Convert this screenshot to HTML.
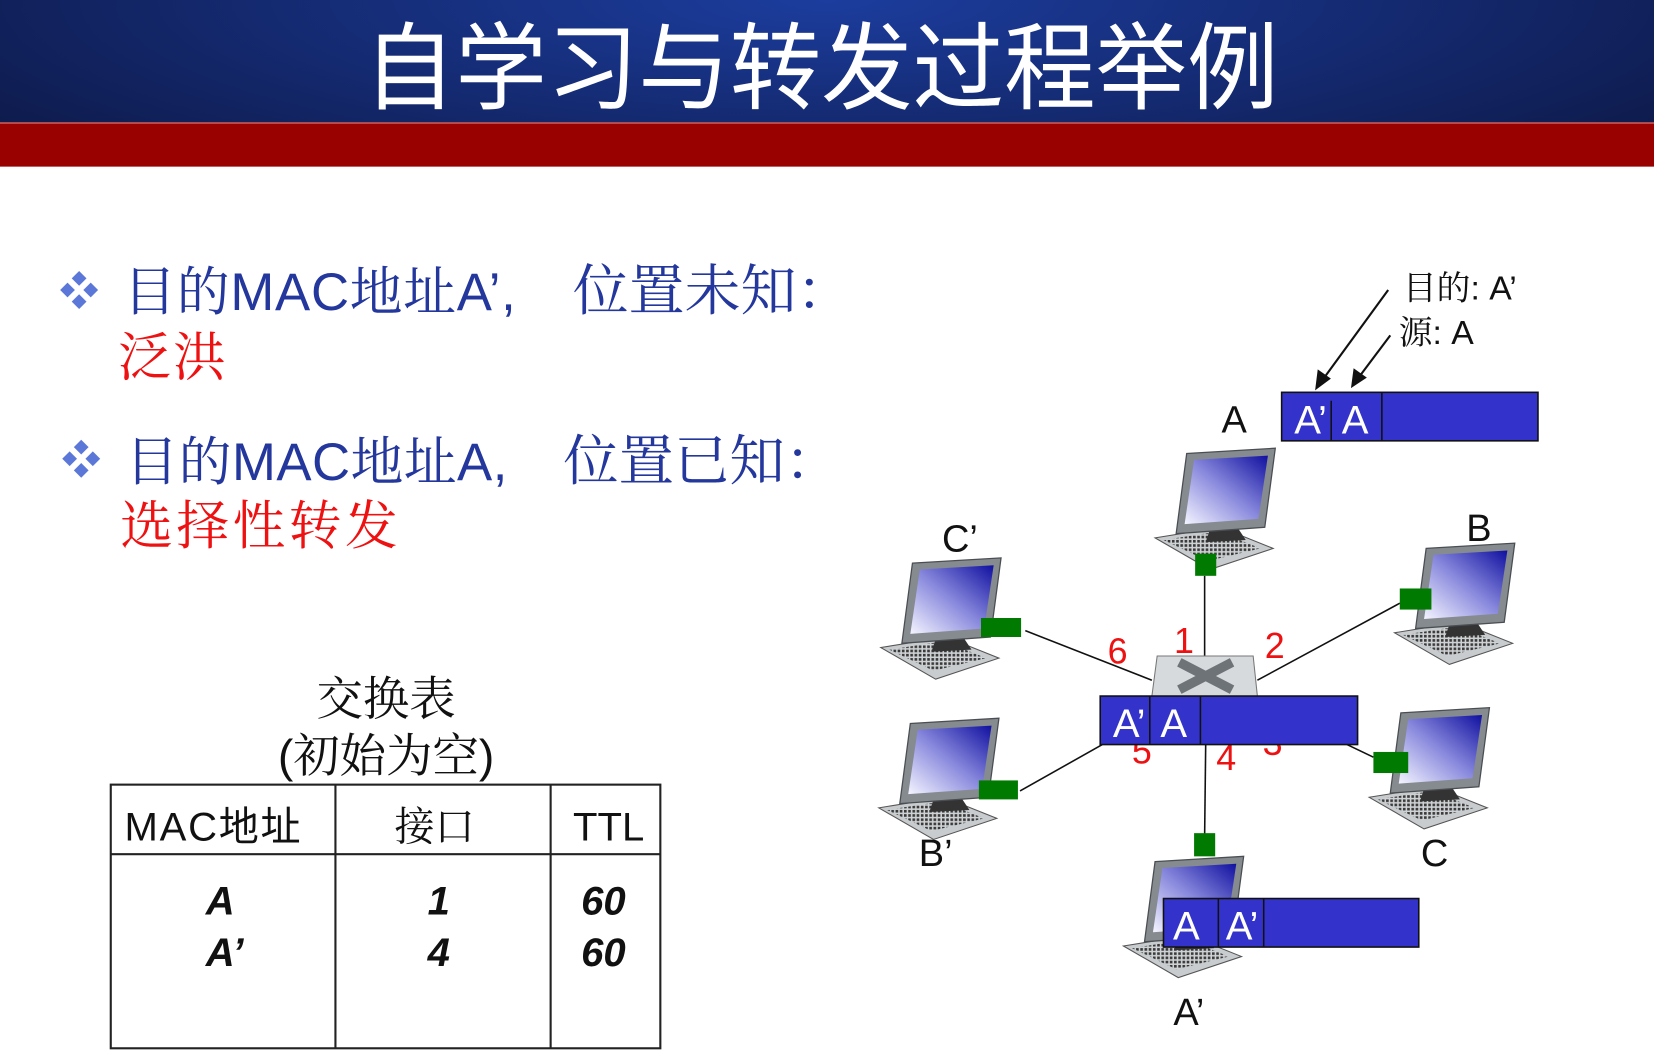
<!DOCTYPE html>
<html><head><meta charset="utf-8"><style>
html,body{margin:0;padding:0;background:#fff;overflow:hidden}
svg{display:block}
.cjk{font-family:"Liberation Sans","Noto Serif CJK SC",serif}
.sans{font-family:"Liberation Sans","Noto Sans CJK SC",sans-serif}
</style></head><body>
<svg width="1654" height="1062" viewBox="0 0 1568 1007" preserveAspectRatio="none" xmlns="http://www.w3.org/2000/svg">
<defs>
<radialGradient id="hd" cx="0.5" cy="0" r="0.6" gradientTransform="scale(1,3)">
<stop offset="0" stop-color="#1c3d9e"/><stop offset="1" stop-color="#0e1b4d"/></radialGradient>
<linearGradient id="scr" x1="0" y1="1" x2="1" y2="0">
<stop offset="0" stop-color="#f4f4ff"/><stop offset="0.5" stop-color="#8888dd"/><stop offset="1" stop-color="#1010a0"/></linearGradient>
<pattern id="keys" width="4" height="4" patternUnits="userSpaceOnUse">
<rect width="4" height="4" fill="#cfd2d4"/><rect width="2.5" height="2.5" fill="#3a3a3a"/></pattern>
<symbol id="pc" overflow="visible">
<polygon points="0,82 62,72 112,92 52,112" fill="#c8ccce" stroke="#555" stroke-width="1"/>
<polygon points="8,84 60,76 100,92 50,104" fill="url(#keys)"/>
<polygon points="52,74 78,72 86,84 48,86" fill="#333"/>
<polygon points="30,2 114,-3 104,72 20,78" fill="#858b8f" stroke="#4a4e52" stroke-width="1.2"/>
<polygon points="37,8 107,4 98,64 28,69" fill="url(#scr)"/>
</symbol>
</defs>
<rect x="0" y="0" width="1568" height="116" fill="url(#hd)"/>
<rect x="0" y="116" width="1568" height="42" fill="#990000"/>
<rect x="0" y="116" width="1568" height="1.5" fill="#c05050"/>
<text x="345" y="96" font-size="90" fill="#fff" textLength="867" lengthAdjust="spacingAndGlyphs" style="font-family:'Noto Sans CJK SC',sans-serif">自学习与转发过程举例</text>

<g fill="#5b78d8">
<polygon points="75,257 82,264 75,271 68,264"/><polygon points="64,268 71,275 64,282 57,275"/>
<polygon points="86,268 93,275 86,282 79,275"/><polygon points="75,279 82,286 75,293 68,286"/>
<polygon points="77,417 84,424 77,431 70,424"/><polygon points="66,428 73,435 66,442 59,435"/>
<polygon points="88,428 95,435 88,442 81,435"/><polygon points="77,439 84,446 77,453 70,446"/>
</g>
<g font-size="50" fill="#23379d" class="cjk">
<text x="117" y="294" textLength="372" lengthAdjust="spacing">目的MAC地址A’,</text><text x="543" y="294" font-size="53">位置未知：</text>
<text x="119" y="455" textLength="362" lengthAdjust="spacing">目的MAC地址A,</text><text x="534" y="455" font-size="52.5">位置已知：</text>
</g>
<text x="112" y="356" font-size="50" fill="#ee1111" class="cjk" textLength="102" lengthAdjust="spacing">泛洪</text>
<text x="114" y="516" font-size="50" fill="#ee1111" class="cjk" textLength="263" lengthAdjust="spacing">选择性转发</text>

<text x="366" y="678" font-size="44" text-anchor="middle" class="cjk" fill="#111">交换表</text>
<text x="366" y="732" font-size="44" text-anchor="middle" class="cjk" fill="#111">(初始为空)</text>
<g stroke="#222" stroke-width="2" fill="none">
<rect x="105" y="744" width="521" height="250"/>
<line x1="105" y1="810" x2="626" y2="810"/>
<line x1="318" y1="744" x2="318" y2="994"/>
<line x1="522" y1="744" x2="522" y2="994"/>
</g>
<text x="118" y="797" font-size="38" class="sans" fill="#111" textLength="167" lengthAdjust="spacing">MAC地址</text>
<text x="412" y="797" font-size="38" text-anchor="middle" class="cjk" fill="#111">接口</text>
<text x="577" y="797" font-size="38" text-anchor="middle" class="sans" fill="#111">TTL</text>
<g font-size="38" font-weight="bold" font-style="italic" class="sans" fill="#111">
<text x="195" y="867">A</text><text x="195" y="916">A’</text>
<text x="416" y="867" text-anchor="middle">1</text><text x="416" y="916" text-anchor="middle">4</text>
<text x="572" y="867" text-anchor="middle">60</text><text x="572" y="916" text-anchor="middle">60</text>
</g>

<g stroke="#111" stroke-width="1.5">
<line x1="1142" y1="546" x2="1142" y2="655"/>
<line x1="972" y1="598" x2="1092" y2="645"/>
<line x1="1327" y1="572" x2="1192" y2="645"/>
<line x1="967" y1="750" x2="1045" y2="706"/>
<line x1="1277" y1="706" x2="1302" y2="718"/>
<line x1="1143" y1="706" x2="1142" y2="792"/>
</g>
<use href="#pc" x="1095" y="428"/>
<use href="#pc" x="835" y="532"/>
<use href="#pc" x="1322" y="518"/>
<use href="#pc" x="833" y="684"/>
<use href="#pc" x="1298" y="674"/>
<use href="#pc" x="1065" y="815"/>
<g fill="#007a00">
<rect x="1133" y="525" width="20" height="21"/>
<rect x="930" y="586" width="38" height="18"/>
<rect x="1327" y="558" width="30" height="20"/>
<rect x="928" y="740" width="37" height="18"/>
<rect x="1302" y="713" width="33" height="20"/>
<rect x="1132" y="790" width="20" height="22"/>
</g>
<polygon points="1097,622 1188,622 1192,660 1092,660" fill="#d6dadd" stroke="#777"/>
<path d="M1118,628 L1168,654 M1168,628 L1118,654" stroke="#6e7377" stroke-width="9"/>
<g font-size="34" class="sans" fill="#ee1111">
<text x="1050" y="629">6</text><text x="1113" y="619">1</text><text x="1199" y="624">2</text>
<text x="1073" y="724">5</text><text x="1153" y="730">4</text><text x="1197" y="716">3</text>
</g>
<g stroke="#111" stroke-width="1.5">
<rect x="1215" y="372" width="243" height="46" fill="#3333cc"/>
<line x1="1262" y1="380" x2="1262" y2="418"/><line x1="1310" y1="372" x2="1310" y2="418"/>
<rect x="1043" y="660" width="244" height="46" fill="#3333cc"/>
<line x1="1090" y1="660" x2="1090" y2="706"/><line x1="1138" y1="660" x2="1138" y2="706"/>
<rect x="1103" y="852" width="242" height="46" fill="#3333cc"/>
<line x1="1155" y1="852" x2="1155" y2="898"/><line x1="1198" y1="852" x2="1198" y2="898"/>
</g>
<g font-size="38" class="sans" fill="#fff">
<text x="1227" y="411">A’</text><text x="1272" y="411">A</text>
<text x="1055" y="699">A’</text><text x="1100" y="699">A</text>
<text x="1112" y="891">A</text><text x="1162" y="891">A’</text>
</g>
<g font-size="36" class="sans" fill="#111" text-anchor="middle">
<text x="1170" y="410">A</text><text x="910" y="523">C’</text><text x="1402" y="513">B</text>
<text x="887" y="821">B’</text><text x="1360" y="821">C</text><text x="1127" y="972">A’</text>
</g>
<g font-size="32" class="cjk" fill="#111">
<text x="1330" y="284">目的: A’</text><text x="1326" y="326">源: A</text>
</g>
<g stroke="#111" stroke-width="2" fill="#111">
<line x1="1316" y1="275" x2="1254" y2="360"/><polygon points="1248,368 1250,352 1260,359"/>
<line x1="1318" y1="318" x2="1288" y2="358"/><polygon points="1282,366 1284,351 1294,358"/>
</g>
</svg>
</body></html>
